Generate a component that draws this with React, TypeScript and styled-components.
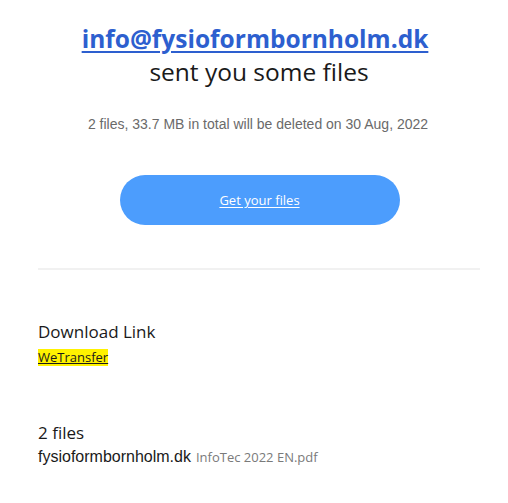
import React from "react";
import styled, { createGlobalStyle } from "styled-components";

const Global = createGlobalStyle`
  html, body { margin: 0; padding: 0; background: #ffffff; }
  body { font-family: "Open Sans", "Noto Sans", sans-serif; color: #17181a; }
`;

const Page = styled.div`
  width: 442px;
  margin-left: 38px;
  padding-top: 22px;
  display: flex;
  flex-direction: column;
`;

const Header = styled.div`
  display: flex;
  flex-direction: column;
  align-items: center;
  text-align: center;
`;

const Sender = styled.a`
  font-family: "Open Sans", sans-serif;
  font-weight: 700;
  font-size: 24.5px;
  line-height: 34px;
  color: #2d5fcf;
  text-decoration: underline;
  text-decoration-thickness: 2px;
  text-underline-offset: 3px;
  margin-right: 8px;
`;

const Title = styled.div`
  font-size: 24.5px;
  line-height: 32px;
  color: #1a1a1a;
`;

const Meta = styled.div`
  margin-top: 27px;
  font-family: "Liberation Sans", Arial, sans-serif;
  font-size: 14px;
  line-height: 18px;
  color: #6a6a6a;
  margin-right: 2px;
`;

const Button = styled.a`
  margin-top: 42px;
  width: 280px;
  height: 50px;
  border-radius: 25px;
  background: #4c9dfd;
  display: flex;
  align-items: center;
  justify-content: center;
  color: #ffffff;
  font-size: 13px;
  text-decoration: underline;
  text-underline-offset: 2px;
  margin-left: 1px;
`;

const Divider = styled.hr`
  margin: 43px 0 0;
  border: none;
  height: 2px;
  background: #f1f1f1;
`;

const Section = styled.section<{ $top: number }>`
  margin-top: ${(p) => p.$top}px;
  display: flex;
  flex-direction: column;
  align-items: flex-start;
`;

const SectionTitle = styled.div`
  font-size: 17px;
  line-height: 24px;
  color: #1a1a1a;
`;

const Highlight = styled.a`
  background: #fff200;
  color: #1a1a1a;
  font-size: 13px;
  line-height: 17px;
  text-decoration: underline;
  margin-top: 5px;
`;

const FileRow = styled.div`
  display: flex;
  align-items: baseline;
  gap: 5px;
  margin-top: 3px;
`;

const FileSource = styled.span`
  font-family: "Liberation Sans", Arial, sans-serif;
  font-size: 16px;
  color: #1a1a1a;
`;

const FileName = styled.span`
  font-size: 13px;
  color: #7a7a7a;
`;

export default function App() {
  return (
    <>
      <Global />
      <Page>
        <Header>
          <Sender href="#">info@fysioformbornholm.dk</Sender>
          <Title>sent you some files</Title>
          <Meta>2 files, 33.7 MB in total will be deleted on 30 Aug, 2022</Meta>
          <Button href="#">Get your files</Button>
        </Header>
        <Divider />
        <Section $top={50}>
          <SectionTitle>Download Link</SectionTitle>
          <Highlight href="#">WeTransfer</Highlight>
        </Section>
        <Section $top={55}>
          <SectionTitle>2 files</SectionTitle>
          <FileRow>
            <FileSource>fysioformbornholm.dk</FileSource>
            <FileName>InfoTec 2022 EN.pdf</FileName>
          </FileRow>
        </Section>
      </Page>
    </>
  );
}
